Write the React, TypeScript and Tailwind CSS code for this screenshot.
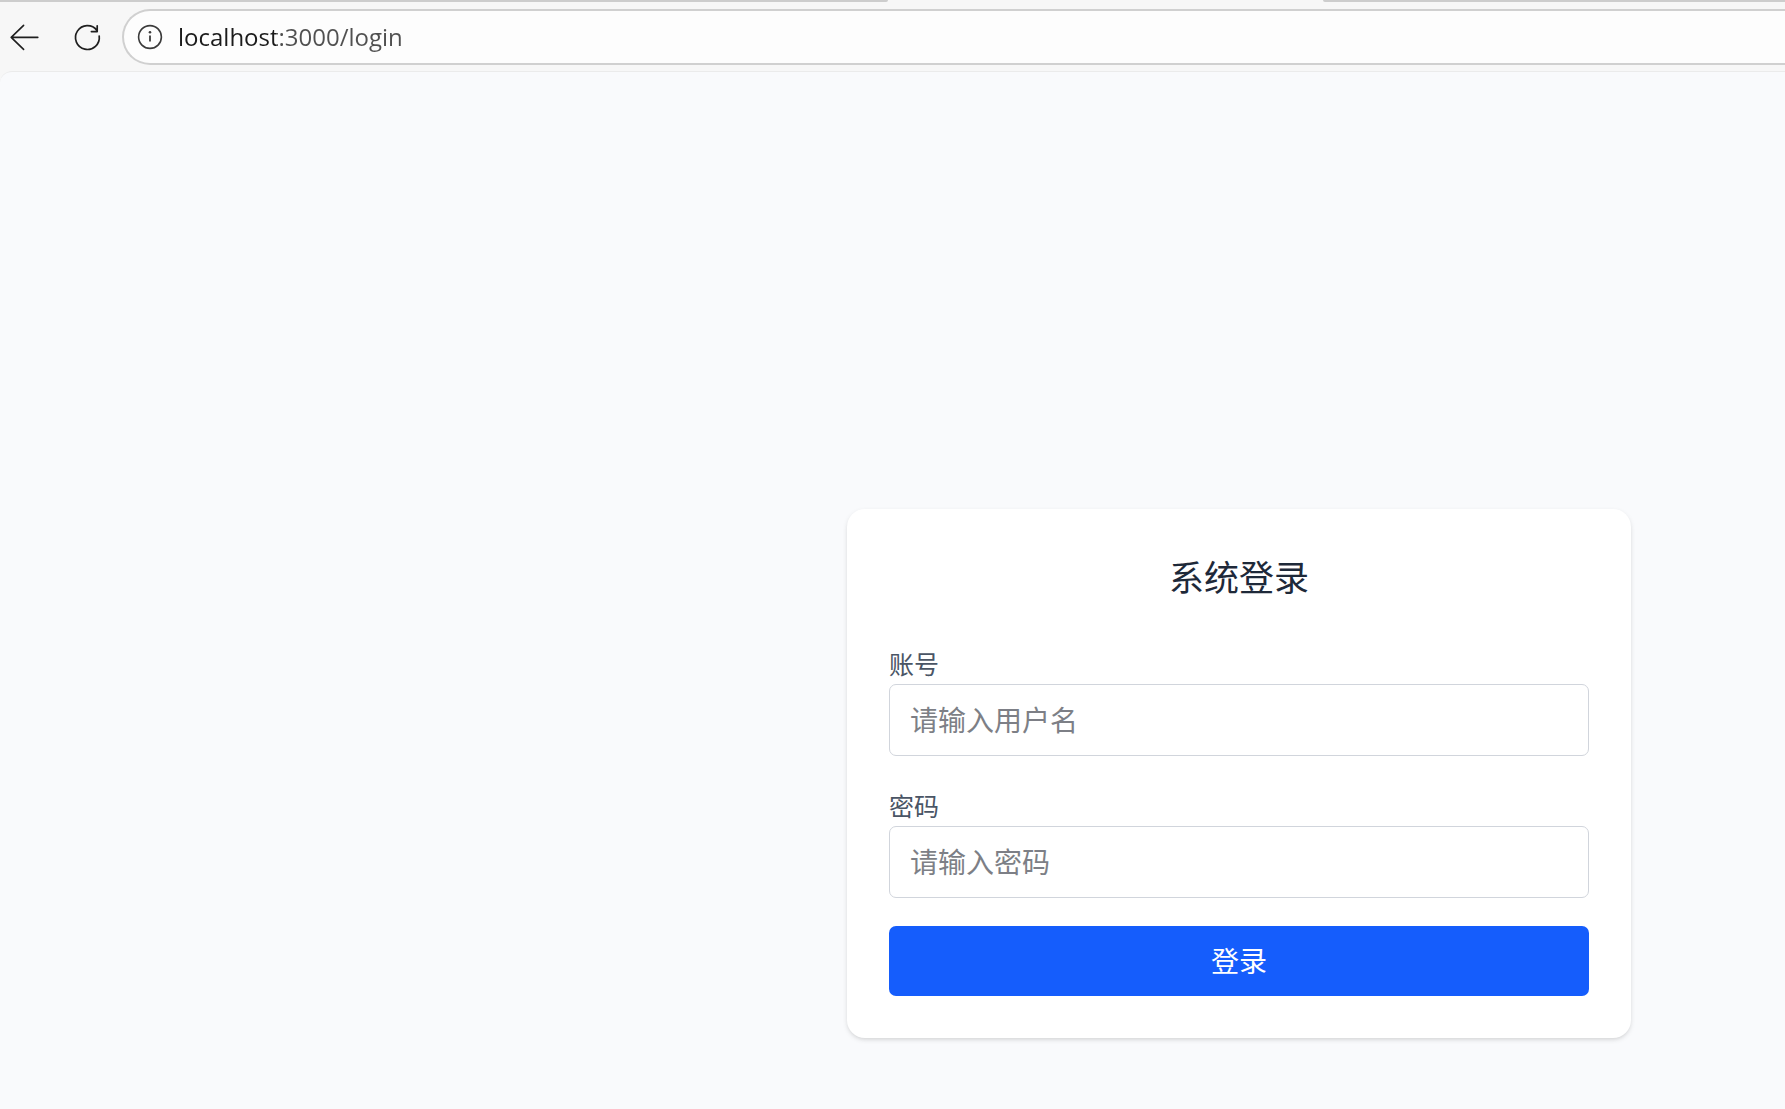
import React, { useState } from 'react';

interface FieldProps {
  id: string;
  label: string;
  type: string;
  placeholder: string;
  value: string;
  onChange: (value: string) => void;
}

function Field({ id, label, type, placeholder, value, onChange }: FieldProps) {
  return (
    <div>
      <label htmlFor={id} className="block text-[25px] leading-[42px] text-gray-600">
        {label}
      </label>
      <input
        id={id}
        type={type}
        placeholder={placeholder}
        value={value}
        onChange={e => onChange(e.target.value)}
        className="block h-[72px] w-full rounded-[7px] border border-gray-300 px-5 pb-[2px] text-[28px] text-gray-800 placeholder:text-[#7d7f86] focus:outline-none focus:border-blue-600"
      />
    </div>
  );
}

function BrowserBar() {
  return (
    <header className="bg-[#f7f7f7]">
      {/* Bottom edge of the tab strip, open under the active tab */}
      <div className="flex h-[2px]">
        <div className="w-[888px] shrink-0 rounded-br-[2px] bg-[#cdcdcd]" />
        <div className="w-[435px] shrink-0" />
        <div className="flex-1 rounded-bl-[2px] bg-[#cdcdcd]" />
      </div>

      <div className="flex items-center pb-[6px] pl-1 pt-[7px]">
        <button type="button" aria-label="后退" className="shrink-0">
          <svg width="40" height="40" viewBox="0 0 40 40" fill="none" stroke="#1f1f1f" strokeWidth="1.6" strokeLinecap="round" strokeLinejoin="round">
            <path d="M19.6 8.4 7.2 20.4l12.4 12M7.2 20.4h26.6" />
          </svg>
        </button>
        <button type="button" aria-label="刷新" className="ml-6 shrink-0">
          <svg width="40" height="40" viewBox="0 0 40 40" fill="none" stroke="#1f1f1f" strokeWidth="1.7" strokeLinecap="round" strokeLinejoin="round">
            <path d="M31.2 19A11.9 11.9 0 1 1 28.9 13.4M29.2 8.8v5.8h-5.8" />
          </svg>
        </button>

        <div className="ml-[14px] flex h-[56px] flex-1 items-center rounded-l-full border-2 border-r-0 border-[#d0d0d0] bg-[#fdfdfd] pl-1.5">
          <svg width="40" height="40" viewBox="0 0 40 40" fill="none" stroke="#3b3b3b" strokeWidth="1.6" className="shrink-0">
            <circle cx="20" cy="20" r="11.4" />
            <path d="M20 18.5v6" strokeWidth="1.8" />
            <circle cx="20" cy="15.3" r="1.3" fill="#3b3b3b" stroke="none" />
          </svg>
          <input
            type="text"
            aria-label="地址"
            defaultValue="localhost:3000/login"
            className="ml-2 h-10 min-w-0 flex-1 bg-linear-to-r from-[#1b1b1b] from-[98px] to-[#505050] to-[98px] bg-clip-text pb-[2px] font-['Open_Sans',sans-serif] text-[24px] text-transparent caret-black focus:outline-none"
          />
        </div>
      </div>
    </header>
  );
}

export default function App() {
  const [username, setUsername] = useState('');
  const [password, setPassword] = useState('');

  return (
    <div className="flex min-h-screen flex-col bg-[#f7f7f7] font-['Noto_Sans_CJK_SC',sans-serif]">
      <BrowserBar />

      <main className="flex flex-1 items-end justify-end rounded-tl-[12px] border-t border-[#ebebeb] bg-[#f9fafc] pb-[71px] pr-[154px]">
        <form
          onSubmit={e => e.preventDefault()}
          className="flex w-full max-w-[784px] flex-col gap-7 rounded-[18px] bg-white p-[42px] shadow-[0_2px_5px_rgba(0,0,0,0.1),0_2px_4px_-2px_rgba(0,0,0,0.1)]"
        >
          <h1 className="mb-[14px] text-center text-[35px] leading-[49px] text-gray-800">系统登录</h1>
          <Field
            id="username"
            label="账号"
            type="text"
            placeholder="请输入用户名"
            value={username}
            onChange={setUsername}
          />
          <Field
            id="password"
            label="密码"
            type="password"
            placeholder="请输入密码"
            value={password}
            onChange={setPassword}
          />
          <button type="submit" className="h-[70px] w-full rounded-[7px] bg-[#155dfc] pb-[2px] text-[28px] text-white hover:bg-blue-700">
            登录
          </button>
        </form>
      </main>
    </div>
  );
}
